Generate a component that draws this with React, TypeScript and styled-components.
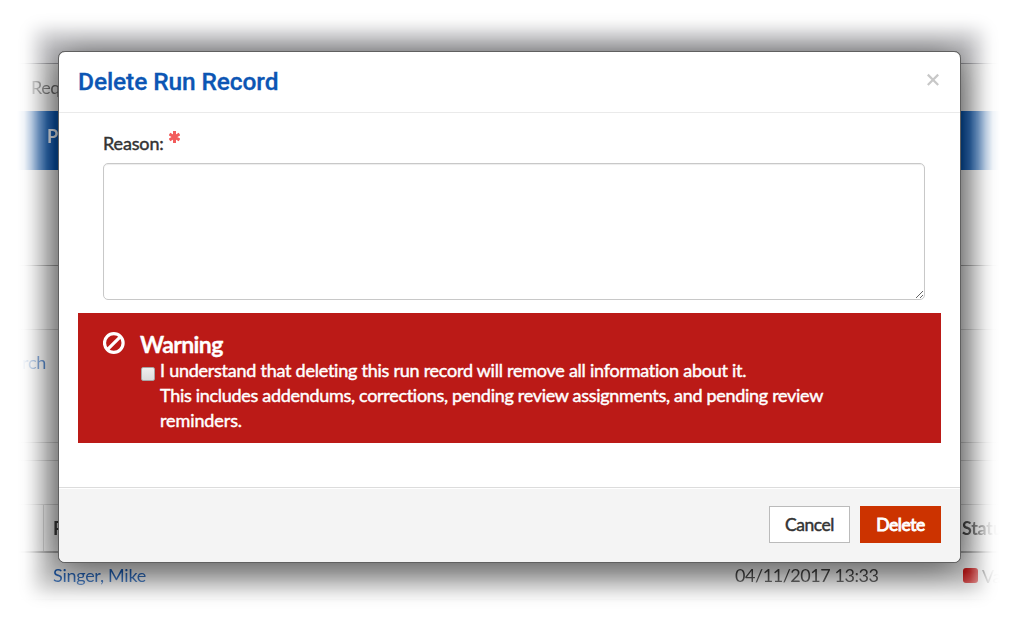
import React from 'react';
import styled, { createGlobalStyle, css } from 'styled-components';

const GlobalStyle = createGlobalStyle`
  * { box-sizing: border-box; }
  html, body { margin: 0; padding: 0; background: #fff; }
  body {
    width: 1023px;
    height: 626px;
    overflow: hidden;
    font-family: Lato, "Liberation Sans", sans-serif;
    font-size: 18px;
    letter-spacing: -0.28px;
    color: #333;
  }
`;

const fade = (dir: string, start: number, end: number, total: number) => `linear-gradient(to ${dir},
  transparent ${start}px, rgba(0,0,0,.06) ${start + 7}px, rgba(0,0,0,.28) ${start + 14}px,
  rgba(0,0,0,.62) ${start + 22}px, rgba(0,0,0,.88) ${start + 30}px, #000 ${start + 38}px,
  #000 ${total - end - 38}px, rgba(0,0,0,.88) ${total - end - 30}px, rgba(0,0,0,.62) ${total - end - 22}px,
  rgba(0,0,0,.28) ${total - end - 14}px, rgba(0,0,0,.06) ${total - end - 7}px, transparent ${total - end}px)`;

const Screen = styled.div`
  position: relative;
  width: 1023px;
  height: 626px;
  overflow: hidden;
  mask-image: ${fade('right', 17, 23, 1023)}, ${fade('bottom', 12, 16, 626)};
  mask-composite: intersect;
`;

const Page = styled.div`
  display: flex;
  flex-direction: column;
  background: #c6c6c6;
`;

const Band = styled.div<{ $h: number; $line?: string }>`
  height: ${(p) => p.$h}px;
  flex: none;
  border-bottom: 1px solid ${(p) => p.$line || '#a6a6a6'};
`;

const TopBand = styled(Band)`
  background: #c6c6c9;
`;

const MenuBand = styled.div`
  height: 47px;
  padding-left: 31px;
  line-height: 47px;
  letter-spacing: -0.5px;
  color: #555;
`;

const NavBand = styled.div`
  height: 59px;
  padding-left: 47px;
  line-height: 51px;
  font-weight: 700;
  color: #c8ccd2;
  background: #084996;
`;

const SearchBand = styled(Band)`
  padding-left: 22px;
  line-height: 65px;
  color: #164c94;
`;

const HeadRow = styled.div`
  display: flex;
  height: 48px;
  line-height: 46px;
  font-weight: 700;
  border-bottom: 2px solid #888;
`;

const DataRow = styled.div`
  display: flex;
  height: 47px;
  line-height: 45px;
  border-bottom: 1px solid #b4b4b4;
`;

const Cell = styled.div<{ $w: number; $divided?: boolean }>`
  flex: none;
  width: ${(p) => p.$w}px;
  padding-left: 9px;
  white-space: nowrap;
  ${(p) => p.$divided && css`border-right: 1px solid #a0a0a0;`}
`;

const DateCell = styled(Cell)`
  letter-spacing: -0.45px;
`;

const NameLink = styled.span`
  color: #164c94;
`;

const StatusCell = styled(Cell)`
  display: flex;
  align-items: center;
  gap: 4px;
  padding-left: 10px;
`;

const StatusSwatch = styled.span`
  width: 15px;
  height: 15px;
  margin-top: -1px;
  border-radius: 3px;
  background: #a80c0c;
`;

const Stage = styled.div`
  position: relative;
  width: 1023px;
  height: 626px;
`;

const ModalShadow = styled.div`
  position: absolute;
  left: 58px;
  top: 51px;
  width: 903px;
  height: 512px;
  border-radius: 7px;
  background: #555;
  box-shadow: 0 4px 36px rgba(0, 0, 0, 0.62);
`;

const Modal = styled.section`
  position: absolute;
  left: 58px;
  top: 51px;
  width: 903px;
  height: 512px;
  display: flex;
  flex-direction: column;
  border: 1px solid #606060;
  border-radius: 7px;
  overflow: hidden;
  background: #fff;
`;

const ModalHeader = styled.header`
  display: flex;
  justify-content: space-between;
  height: 61px;
  padding: 0 19px;
  border-bottom: 1px solid #eaeaea;
`;

const Title = styled.h3`
  margin: 0;
  font: 500 24.5px/60px Roboto, sans-serif;
  letter-spacing: -0.1px;
  color: #0c56b4;
  -webkit-text-stroke: 0.3px currentColor;
`;

const CloseButton = styled.button`
  align-self: flex-start;
  margin: 21px 1px 0 0;
  padding: 0;
  width: 14px;
  height: 14px;
  border: 0;
  background: none;
  line-height: 0;
`;

const ModalBody = styled.div`
  flex: 1;
  padding: 0 19px;
`;

const Field = styled.div`
  padding: 17px 16px 0 25px;
`;

const medium = css`
  font-weight: 400;
  -webkit-text-stroke: 0.45px currentColor;
`;

const FieldLabel = styled.label`
  display: flex;
  height: 33px;
  gap: 5px;
  line-height: 27px;
  letter-spacing: -0.15px;
  ${medium}

  svg { margin-top: 1px; }
`;

const ReasonInput = styled.textarea`
  display: block;
  width: 822px;
  height: 137px;
  border: 1px solid #c8c8c8;
  border-radius: 5px;
  background: #fff;
  box-shadow: inset 0 1px 1px rgba(0, 0, 0, 0.075);
  resize: vertical;
  outline: none;
`;

const WarningBox = styled.div`
  display: flex;
  gap: 15px;
  height: 130px;
  margin-top: 13px;
  padding: 18px 25px 0;
  color: #fff;
  background: #bb1a17;

  > svg { flex: none; margin-top: 1px; }
`;

const WarningTitle = styled.h4`
  margin: 0;
  height: 27px;
  font-size: 23px;
  line-height: 26px;
  font-weight: 700;
  letter-spacing: -0.6px;
  -webkit-text-stroke: 0.3px currentColor;
`;

const Acknowledge = styled.label`
  display: flex;
  gap: 5px;
  line-height: 25px;
  white-space: nowrap;
  ${medium}
`;

const AckLine = styled.span<{ $spacing: number }>`
  display: block;
  letter-spacing: ${(p) => p.$spacing}px;
`;

const Checkbox = styled.input`
  appearance: none;
  flex: none;
  width: 14px;
  height: 14px;
  margin: 9px 0 0 1px;
  border: 1px solid #a8a4a4;
  border-radius: 2px;
  background: linear-gradient(#eee, #dcdcdc);
`;

const ModalFooter = styled.footer`
  display: flex;
  justify-content: flex-end;
  gap: 10px;
  height: 75px;
  padding: 18px 19px 0;
  border-top: 1px solid #dcdcdc;
  background: #f4f4f4;
  box-shadow: inset 0 1px 0 #fff;
`;

const Button = styled.button<{ $danger?: boolean }>`
  width: 81px;
  height: 37px;
  padding: 0;
  font: 400 17.5px/35px Lato, sans-serif;
  letter-spacing: -0.45px;
  border: 1px solid ${(p) => (p.$danger ? '#cc3300' : '#bbb')};
  color: ${(p) => (p.$danger ? '#fff' : '#333')};
  background: ${(p) => (p.$danger ? '#cc3300' : '#fff')};
  -webkit-text-stroke: ${(p) => (p.$danger ? '0.9px' : '0.45px')} currentColor;
`;

export default function App() {
  return (
    <>
      <GlobalStyle />
      <Stage>
        <Screen>
          <Page>
            <TopBand $h={64} $line="#85858a" />
            <MenuBand>Req</MenuBand>
            <NavBand>Pe</NavBand>
            <Band $h={96} $line="#858585" />
            <Band $h={64} />
            <SearchBand $h={113}>rch</SearchBand>
            <Band $h={18} />
            <Band $h={44} />
            <HeadRow>
              <Cell $w={44} $divided />
              <Cell $w={909}>P</Cell>
              <Cell $w={70}>Status</Cell>
            </HeadRow>
            <DataRow>
              <Cell $w={44} />
              <Cell $w={682}><NameLink>Singer, Mike</NameLink></Cell>
              <DateCell $w={227}>04/11/2017 13:33</DateCell>
              <StatusCell $w={70}><StatusSwatch />Valid</StatusCell>
            </DataRow>
            <Band $h={28} />
          </Page>
          <ModalShadow />
        </Screen>
        <Modal role="dialog" aria-modal="true">
          <ModalHeader>
            <Title>Delete Run Record</Title>
            <CloseButton aria-label="Close">
              <svg width="14" height="14" viewBox="0 0 14 14" fill="none" stroke="#c8c8c8" strokeWidth="2.2">
                <path d="M1.8 1.6L12.2 12M12.2 1.6L1.8 12" />
              </svg>
            </CloseButton>
          </ModalHeader>
          <ModalBody>
            <Field>
              <FieldLabel htmlFor="reason">
                Reason:
                <svg width="11" height="12" viewBox="0 0 11 12" stroke="#f25c5c" strokeWidth="3">
                  <path d="M5.5 0V12M0.5 3L10.5 9M10.5 3L0.5 9" />
                </svg>
              </FieldLabel>
              <ReasonInput id="reason" />
            </Field>
            <WarningBox>
              <svg width="22" height="23" viewBox="0 0 22 23" fill="none" stroke="#fff" strokeWidth="3.2">
                <circle cx="10.8" cy="11" r="9.3" />
                <path d="M4.6 17.4L17.2 4.8" />
              </svg>
              <div>
                <WarningTitle>Warning</WarningTitle>
                <Acknowledge>
                  <Checkbox type="checkbox" />
                  <span>
                    <AckLine $spacing={-0.25}>
                      I understand that deleting this run record will remove all information about it.
                    </AckLine>
                    <AckLine $spacing={-0.3}>
                      This includes addendums, corrections, pending review assignments, and pending review
                    </AckLine>
                    <AckLine $spacing={-0.1}>reminders.</AckLine>
                  </span>
                </Acknowledge>
              </div>
            </WarningBox>
          </ModalBody>
          <ModalFooter>
            <Button>Cancel</Button>
            <Button $danger>Delete</Button>
          </ModalFooter>
        </Modal>
      </Stage>
    </>
  );
}
